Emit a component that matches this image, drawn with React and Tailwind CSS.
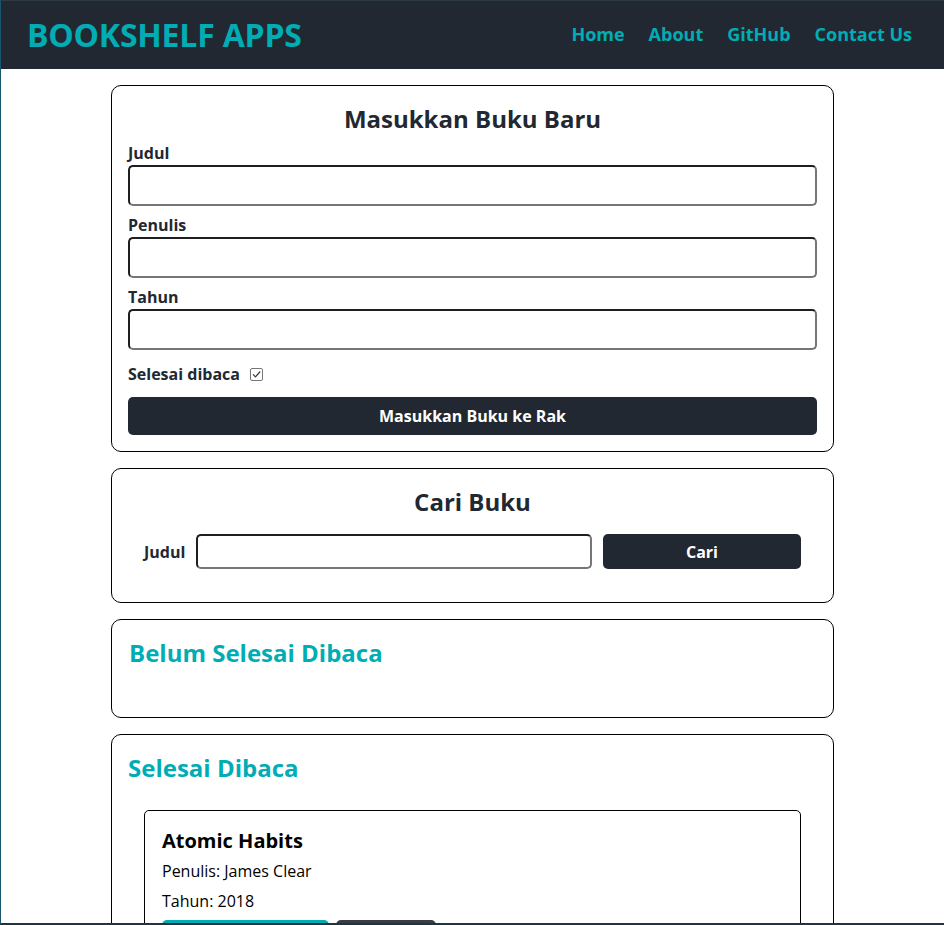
import React from "react";

function Field({ label, first }) {
  return (
    <div className={first ? "flex flex-col" : "flex flex-col mt-[7px]"}>
      <label className="font-bold text-base leading-6 text-[#222831]">{label}</label>
      <input
        type="text"
        className="h-[41px] w-full rounded-[5px] border-2 border-t-[#1f1f1f] border-l-[#1f1f1f] border-b-[#767676] border-r-[#767676] bg-white px-2 outline-none"
      />
    </div>
  );
}

export default function App() {
  return (
    <div
      className="min-h-screen bg-white text-black"
      style={{ fontFamily: '"Open Sans", "Noto Sans", sans-serif' }}
    >
      <header className="h-[69px] bg-[#222831] flex items-center justify-between pl-[27px] pr-[32px]">
        <h1 className="text-[32px] font-bold text-[#00ADB5] leading-none tracking-[-0.2px]">BOOKSHELF APPS</h1>
        <nav className="flex items-center gap-6 text-[18px] font-bold text-[#00ADB5]">
          <a href="#">Home</a>
          <a href="#">About</a>
          <a href="#">GitHub</a>
          <a href="#">Contact Us</a>
        </nav>
      </header>

      <main className="w-[723px] ml-[111px] flex flex-col gap-4 pt-4 pb-8">
        {/* Input section */}
        <section className="border border-black rounded-[10px] p-4">
          <h2 className="text-2xl font-bold text-center leading-[34px] text-[#222831] mb-[5px]">Masukkan Buku Baru</h2>
          <form className="flex flex-col">
            <Field label="Judul" first />
            <Field label="Penulis" />
            <Field label="Tahun" />
            <div className="mt-3 flex items-center h-6">
              <label className="font-bold text-base leading-6 text-[#222831]">Selesai dibaca</label>
              <span className="ml-[10px] w-[13px] h-[13px] rounded-[2px] border border-[#767676] bg-white flex items-center justify-center">
                <svg width="9" height="9" viewBox="0 0 9 9" fill="none">
                  <path d="M1.3 4.6 L3.5 6.8 L7.8 2" stroke="#333" strokeWidth="1.2" strokeLinecap="round" strokeLinejoin="round" />
                </svg>
              </span>
            </div>
            <button
              type="button"
              className="mt-[11px] h-[38px] w-full rounded-[5px] bg-[#222831] text-white font-bold text-base"
            >
              Masukkan Buku ke Rak
            </button>
          </form>
        </section>

        {/* Search section */}
        <section className="border border-black rounded-[10px] p-4">
          <h2 className="text-2xl font-bold text-center leading-[34px] text-[#222831]">Cari Buku</h2>
          <form className="px-4 pt-[15px] pb-[17px] flex items-center">
            <label className="font-bold text-base text-[#222831] mr-[11px]">Judul</label>
            <input
              type="text"
              className="flex-1 h-[35px] rounded-[5px] border-2 border-t-[#1f1f1f] border-l-[#1f1f1f] border-b-[#767676] border-r-[#767676] bg-white px-2 outline-none"
            />
            <button
              type="button"
              className="ml-[11px] w-[198px] h-[35px] rounded-[5px] bg-[#222831] text-white font-bold text-base"
            >
              Cari
            </button>
          </form>
        </section>

        {/* Incomplete */}
        <section className="border border-black rounded-[10px] p-4">
          <h2 className="text-2xl font-bold leading-[34px] text-[#00ADB5] pl-px">Belum Selesai Dibaca</h2>
          <div className="h-[31px]"></div>
        </section>

        {/* Complete */}
        <section className="border border-black rounded-[10px] p-4">
          <h2 className="text-2xl font-bold leading-[34px] text-[#00ADB5]">Selesai Dibaca</h2>
          <div className="px-4 pt-[25px] pb-4">
            <article className="border border-black rounded-[5px] py-4 pl-[17px] pr-4">
              <h3 className="text-xl font-bold leading-[27px] text-black">Atomic Habits</h3>
              <p className="mt-[5px] leading-6 text-base">Penulis: James Clear</p>
              <p className="mt-[6px] leading-6 text-base">Tahun: 2018</p>
              <div className="mt-[7px] flex gap-[7px]">
                <button type="button" className="w-[167px] h-[35px] rounded-[5px] bg-[#00ADB5] text-white font-bold text-sm">
                  Belum selesai dibaca
                </button>
                <button type="button" className="w-[100px] h-[35px] rounded-[5px] bg-[#393E46] text-white font-bold text-sm">
                  Hapus buku
                </button>
              </div>
            </article>
          </div>
        </section>
      </main>

      <div className="fixed inset-0 pointer-events-none border-l border-t border-b-2 border-l-[#1b5670] border-t-[#2c3a44] border-b-[#1e3440]"></div>
    </div>
  );
}
